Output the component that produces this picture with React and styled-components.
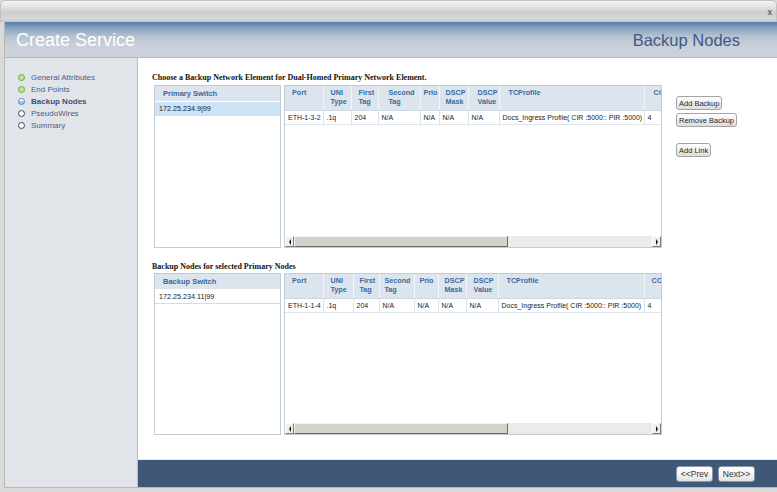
import styled, { createGlobalStyle } from "styled-components";

const GlobalStyle = createGlobalStyle`
  html, body {
    margin: 0;
    padding: 0;
    background: #d6d6d6;
  }
  body {
    font-family: "Liberation Sans", Arial, sans-serif;
  }
`;

const Window = styled.div`
  width: 777px;
  height: 492px;
  display: flex;
  flex-direction: column;
  background: #dadada;
  overflow: hidden;
`;

const TitleBar = styled.div`
  height: 22px;
  flex: none;
  display: flex;
  justify-content: flex-end;
  align-items: center;
  padding-right: 4px;
  box-sizing: border-box;
  border-radius: 5px 5px 0 0;
  border: 1px solid #c2c2c2;
  border-bottom: none;
  background: linear-gradient(#f4f4f4 0%, #e2e2e2 30%, #cdcdcd 55%, #d7d7d7 85%, #c3c3c3 100%);
`;

const CloseX = styled.span`
  font-size: 9px;
  color: #3a3a3a;
`;

const Body = styled.div`
  flex: 1;
  min-height: 0;
  display: flex;
  flex-direction: column;
  margin: 0 0 4px 4px;
  border-left: 1px solid #b7b7b7;
  border-bottom: 1px solid #b9b9b9;
`;

const Header = styled.header`
  height: 36px;
  flex: none;
  display: flex;
  align-items: center;
  justify-content: space-between;
  padding: 1px 37px 0 11px;
  box-sizing: border-box;
  border-bottom: 1px solid #a9bacc;
  background: linear-gradient(#5a7ead 0%, #8aa3c2 18%, #b7c3d2 42%, #c8cfd9 65%, #ccd3dc 100%);
`;

const Title = styled.h1`
  margin: 0;
  font-weight: normal;
  font-size: ${(p) => p.$size}px;
  color: ${(p) => p.$color};
`;

const Main = styled.div`
  flex: 1;
  min-height: 0;
  display: flex;
`;

const Sidebar = styled.nav`
  width: 132px;
  flex: none;
  background: #e1e5ea;
  border-right: 1px solid #b6bec8;
`;

const NavList = styled.ul`
  list-style: none;
  margin: 0;
  padding: 14px 0 0 13px;
`;

const NavItem = styled.li`
  display: flex;
  align-items: center;
  gap: 6px;
  height: 11.8px;
  font-size: 8px;
  color: ${(p) => (p.$active ? "#3d5072" : "#4d6084")};
  font-weight: ${(p) => (p.$active ? "bold" : "normal")};
`;

const dotColors = {
  done: { ring: "#6caa48", fill: "#bde39d" },
  active: { ring: "#4a88d0", fill: "linear-gradient(#ffffff 35%, #9cc6f2 40%)" },
  todo: { ring: "#304a72", fill: "#ffffff" },
};

const Dot = styled.span`
  width: 7px;
  height: 7px;
  box-sizing: border-box;
  border-radius: 50%;
  border: 1.5px solid ${(p) => dotColors[p.$state].ring};
  background: ${(p) => dotColors[p.$state].fill};
`;

const ContentCol = styled.div`
  flex: 1;
  display: flex;
  flex-direction: column;
  min-width: 0;
`;

const Content = styled.main`
  flex: 1;
  background: #ffffff;
  padding: 0 0 0 14px;
`;

const SectionTitle = styled.div`
  font-family: "Liberation Serif", "Times New Roman", serif;
  font-weight: bold;
  font-size: 8px;
  line-height: 10px;
  color: #111;
  margin-top: ${(p) => p.$top}px;
  margin-bottom: ${(p) => p.$bottom}px;
`;

const PanelRow = styled.div`
  display: flex;
  align-items: flex-start;
  margin-left: 2px;
`;

const Box = styled.div`
  box-sizing: border-box;
  height: ${(p) => p.$h}px;
  width: ${(p) => p.$w}px;
  border: 1px solid #c3cbd4;
  background: #fff;
  display: flex;
  flex-direction: column;
  overflow: hidden;
`;

const ListHeader = styled.div`
  height: 15px;
  line-height: 15px;
  padding-left: 8px;
  background: #dce5ee;
  color: #3a6898;
  font-weight: bold;
  font-size: 7.5px;
  border-bottom: 1px solid #fff;
`;

const ListRow = styled.div`
  height: 14px;
  line-height: 13px;
  padding-left: 4px;
  font-size: 7.2px;
  color: #222;
  box-sizing: border-box;
  background: ${(p) => (p.$selected ? "#cde3f6" : "#fff")};
  border-bottom: 1px solid #d2dce6;
`;

const TableBox = styled(Box)`
  margin-left: 3px;
`;

const TableArea = styled.div`
  flex: 1;
  overflow: hidden;
`;

const Grid = styled.table`
  border-collapse: collapse;
  table-layout: fixed;
`;

const HeadCell = styled.th`
  height: 24px;
  box-sizing: border-box;
  padding: 3px 0 0 ${(p) => p.$pad}px;
  text-align: left;
  vertical-align: top;
  background: #dce5ee;
  color: #3a6b9c;
  font-size: 7.2px;
  line-height: 8.6px;
  font-weight: bold;
  border-right: 1px solid #f4f7fa;
  border-bottom: 1px solid #cfd8e2;
  white-space: nowrap;
  overflow: hidden;
`;

const DataCell = styled.td`
  height: 13px;
  padding: 0 2px 0 3px;
  font-size: 7px;
  color: #222;
  border-right: 1px solid #dde3ea;
  border-bottom: 1px solid #dde3ea;
  white-space: nowrap;
  overflow: hidden;
`;

const ScrollBar = styled.div`
  height: 11px;
  flex: none;
  display: flex;
  background: #ecebe7;
`;

const ScrollArrow = styled.div`
  width: 9px;
  box-sizing: border-box;
  display: flex;
  align-items: center;
  justify-content: center;
  background: #f0efeb;
  border: 1px solid;
  border-color: #fff #7c7c7c #7c7c7c #fff;

  &::after {
    content: "";
    border-top: 3px solid transparent;
    border-bottom: 3px solid transparent;
    ${(p) => (p.$dir === "left" ? "border-right: 2px solid #111;" : "border-left: 2px solid #111;")}
  }
`;

const ScrollThumb = styled.div`
  width: ${(p) => p.$w}px;
  box-sizing: border-box;
  background: #d5d2cb;
  border: 1px solid;
  border-color: #f4f3f0 #6b6b6b #6b6b6b #f4f3f0;
`;

const ScrollTrack = styled.div`
  flex: 1;
`;

const ButtonCol = styled.div`
  display: flex;
  flex-direction: column;
  align-items: flex-start;
  margin: 11px 0 0 14px;
`;

const SideButton = styled.button`
  font-family: "Liberation Sans", Arial, sans-serif;
  font-size: 7.5px;
  color: #1e1e1e;
  height: 14px;
  padding: 0 2px;
  margin-bottom: ${(p) => p.$gap}px;
  border: 1px solid #a4a4a4;
  border-radius: 3px;
  background: linear-gradient(#ffffff, #efefef 55%, #dcdcdc);
  white-space: nowrap;
`;

const Footer = styled.footer`
  height: 27px;
  flex: none;
  display: flex;
  justify-content: flex-end;
  align-items: center;
  gap: 5px;
  padding-right: 22px;
  background: #3f5878;
  border-top: 1px solid #e4ecf3;
`;

const NavButton = styled.button`
  font-family: "Liberation Sans", Arial, sans-serif;
  font-size: 8.5px;
  color: #333;
  height: 16px;
  width: 37px;
  padding: 0;
  border: 1px solid #8d99a8;
  border-radius: 3px;
  background: linear-gradient(#ffffff, #f2f2f2 60%, #e0e0e0);
`;

const steps = [
  { label: "General Attributes", state: "done" },
  { label: "End Points", state: "done" },
  { label: "Backup Nodes", state: "active" },
  { label: "PseudoWires", state: "todo" },
  { label: "Summary", state: "todo" },
];

// column width and header indent for each table
const topCols = [
  [38, 7], [28, 7], [27, 7], [42, 10], [19, 3], [29, 6], [31, 9], [145, 9], [40, 9],
];
const bottomCols = [
  [38, 7], [30, 7], [26, 6], [35, 5], [24, 5], [28, 6], [32, 7], [146, 8], [40, 7],
];
const headers = [
  ["Port"],
  ["UNI", "Type"],
  ["First", "Tag"],
  ["Second", "Tag"],
  ["Prio"],
  ["DSCP", "Mask"],
  ["DSCP", "Value"],
  ["TCProfile"],
  ["COS"],
];

function ServiceTable({ cols, row, height }) {
  const total = cols.reduce((a, c) => a + c[0], 0);
  return (
    <TableBox $h={height} $w={378}>
      <TableArea>
        <Grid style={{ width: total }}>
          <colgroup>
            {cols.map((c, i) => (
              <col key={i} style={{ width: c[0] }} />
            ))}
          </colgroup>
          <thead>
            <tr>
              {headers.map((h, i) => (
                <HeadCell key={i} $pad={cols[i][1]}>
                  {h[0]}
                  {h[1] && <br />}
                  {h[1]}
                </HeadCell>
              ))}
            </tr>
          </thead>
          <tbody>
            <tr>
              {row.map((c, i) => (
                <DataCell key={i}>{c}</DataCell>
              ))}
            </tr>
          </tbody>
        </Grid>
      </TableArea>
      <ScrollBar>
        <ScrollArrow $dir="left" />
        <ScrollThumb $w={214} />
        <ScrollTrack />
        <ScrollArrow $dir="right" />
      </ScrollBar>
    </TableBox>
  );
}

const profile = "Docs_Ingress Profile( CIR :5000:: PIR :5000)";

export default function App() {
  return (
    <Window>
      <GlobalStyle />
      <TitleBar>
        <CloseX>x</CloseX>
      </TitleBar>
      <Body>
        <Header>
          <Title $size={18} $color="#ffffff">Create Service</Title>
          <Title $size={16.5} $color="#3c5a84">Backup Nodes</Title>
        </Header>
        <Main>
          <Sidebar>
            <NavList>
              {steps.map((s) => (
                <NavItem key={s.label} $active={s.state === "active"}>
                  <Dot $state={s.state} />
                  {s.label}
                </NavItem>
              ))}
            </NavList>
          </Sidebar>
          <ContentCol>
            <Content>
              <SectionTitle $top={15} $bottom={2}>
                Choose a Backup Network Element for Dual-Homed Primary Network Element.
              </SectionTitle>
              <PanelRow>
                <Box $h={163} $w={127}>
                  <ListHeader>Primary Switch</ListHeader>
                  <ListRow $selected>172.25.234.9|99</ListRow>
                </Box>
                <ServiceTable
                  cols={topCols}
                  height={163}
                  row={["ETH-1-3-2", ".1q", "204", "N/A", "N/A", "N/A", "N/A", profile, "4"]}
                />
                <ButtonCol>
                  <SideButton $gap={3}>Add Backup</SideButton>
                  <SideButton $gap={16}>Remove Backup</SideButton>
                  <SideButton $gap={0}>Add Link</SideButton>
                </ButtonCol>
              </PanelRow>
              <SectionTitle $top={14} $bottom={1}>Backup Nodes for selected Primary Nodes</SectionTitle>
              <PanelRow>
                <Box $h={162} $w={127}>
                  <ListHeader>Backup Switch</ListHeader>
                  <ListRow>172.25.234.11|99</ListRow>
                </Box>
                <ServiceTable
                  cols={bottomCols}
                  height={162}
                  row={["ETH-1-1-4", ".1q", "204", "N/A", "N/A", "N/A", "N/A", profile, "4"]}
                />
              </PanelRow>
            </Content>
            <Footer>
              <NavButton>&lt;&lt;Prev</NavButton>
              <NavButton>Next&gt;&gt;</NavButton>
            </Footer>
          </ContentCol>
        </Main>
      </Body>
    </Window>
  );
}
